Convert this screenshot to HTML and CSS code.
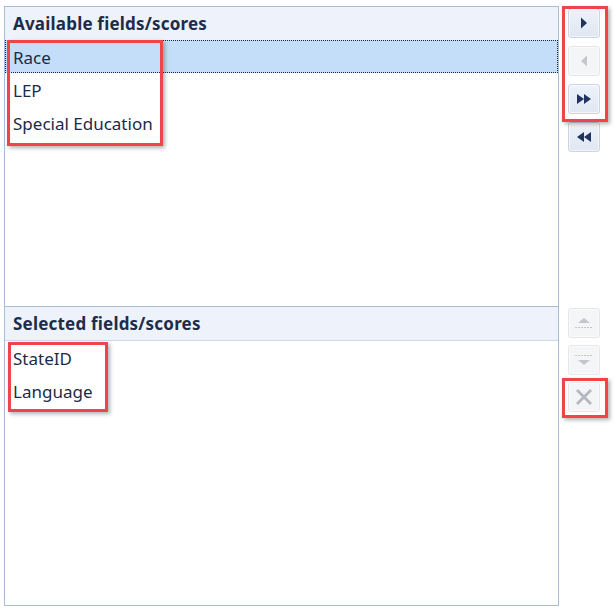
FILE: index.html
```html
<!DOCTYPE html>
<html lang="en">
<head>
  <meta charset="UTF-8" />
  <title>Field selector</title>
  <link rel="stylesheet" href="styles.css">
</head>
<body>
  <div class="page">
    <div class="lists">
      <div class="list list-top">
        <div class="list-head">Available fields/scores</div>
        <div class="row selected">Race</div>
        <div class="row">LEP</div>
        <div class="row">Special Education</div>
      </div>
      <div class="list list-bottom">
        <div class="list-head head-line">Selected fields/scores</div>
        <div class="row">StateID</div>
        <div class="row">Language</div>
      </div>
    </div>

    <div class="tools">
      <div class="tool-group">
        <button class="btn" title="Add">
          <svg width="12" height="14" viewBox="0 0 12 14"><path d="M3 1.5 L9 7 L3 12.5 Z" fill="#1f3560"/></svg>
        </button>
        <button class="btn off" title="Remove">
          <svg width="12" height="14" viewBox="0 0 12 14"><path d="M9 1.5 L3 7 L9 12.5 Z" fill="#c3c7cc"/></svg>
        </button>
        <button class="btn" title="Add all">
          <svg width="16" height="14" viewBox="0 0 16 14"><path d="M1 2 L8 7 L1 12 Z M8 2 L15 7 L8 12 Z" fill="#1f3560"/></svg>
        </button>
        <button class="btn" title="Remove all">
          <svg width="16" height="14" viewBox="0 0 16 14"><path d="M8 2 L1 7 L8 12 Z M15 2 L8 7 L15 12 Z" fill="#1f3560"/></svg>
        </button>
      </div>

      <div class="tool-group tools-bottom">
        <button class="btn off" title="Move up">
          <svg width="20" height="16" viewBox="0 0 20 16"><path d="M4 8 L10 3 L16 8 Z" fill="#c3c7cc"/><path d="M1 12.5 H19" stroke="#c3c7cc" stroke-width="1" stroke-dasharray="2 1"/></svg>
        </button>
        <button class="btn off" title="Move down">
          <svg width="20" height="16" viewBox="0 0 20 16"><path d="M1 3.5 H19" stroke="#c3c7cc" stroke-width="1" stroke-dasharray="2 1"/><path d="M4 8 L10 13 L16 8 Z" fill="#c3c7cc"/></svg>
        </button>
        <button class="btn off" title="Delete">
          <svg width="18" height="18" viewBox="0 0 18 18"><path d="M2 2 L16 16 M16 2 L2 16" stroke="#b4b8be" stroke-width="2.8"/></svg>
        </button>
      </div>
    </div>

    <!-- red callouts drawn over the screenshot -->
    <div class="mark mark-avail"></div>
    <div class="mark mark-selected"></div>
    <div class="mark mark-move"></div>
    <div class="mark mark-delete"></div>
  </div>
</body>
</html>
```

FILE: styles.css
```css
body {
  margin: 0;
  background: #fff;
  font-family: "Noto Sans", "Open Sans", sans-serif;
  color: #1c2a48;
}

.page {
  position: relative;
  display: flex;
  padding: 6px 0 0 4px;
}

.lists {
  width: 555px;
  height: 600px;
  border: 1px solid #a9bcd6;
  box-sizing: border-box;
  display: flex;
  flex-direction: column;
}

.list {
  flex: 1;
}

.list-bottom {
  border-top: 1px solid #a9bcd6;
}

.list-head {
  height: 33px;
  line-height: 33px;
  padding-left: 8px;
  background: #eef2fb;
  font-weight: bold;
  font-size: 17px;
  letter-spacing: 0.2px;
  color: #1e2c4a;
}

.head-line {
  border-bottom: 1px solid #cdd8e8;
}

.row {
  height: 33px;
  line-height: 35px;
  padding-left: 8px;
  font-size: 17px;
}

.row.selected {
  background: #c4ddf8;
  outline: 1px dotted #1a2840;
  outline-offset: -1px;
}

.tools {
  margin-left: 9px;
  display: flex;
  flex-direction: column;
}

.tool-group {
  display: flex;
  flex-direction: column;
  gap: 8px;
  margin-top: 2px;
}

.tools-bottom {
  margin-top: 156px;
  gap: 7px;
}

.btn {
  width: 32px;
  height: 30px;
  padding: 0;
  display: flex;
  align-items: center;
  justify-content: center;
  background: linear-gradient(#eef3fa, #dfe7f2);
  border: 1px solid #c9d5e5;
  border-radius: 3px;
  box-shadow: inset 0 0 0 1px rgba(255, 255, 255, 0.6);
}

.btn.off {
  background: #f4f5f7;
  border-color: #e3e6ea;
}

.mark {
  position: absolute;
  border: 3px solid #f0444a;
  box-shadow: 2px 2px 4px rgba(0, 0, 0, 0.3);
  box-sizing: border-box;
}

.mark-avail {
  left: 7px;
  top: 40px;
  width: 156px;
  height: 106px;
}

.mark-selected {
  left: 8px;
  top: 342px;
  width: 100px;
  height: 70px;
}

.mark-move {
  left: 562px;
  top: 6px;
  width: 46px;
  height: 116px;
}

.mark-delete {
  left: 562px;
  top: 378px;
  width: 46px;
  height: 40px;
}
```
